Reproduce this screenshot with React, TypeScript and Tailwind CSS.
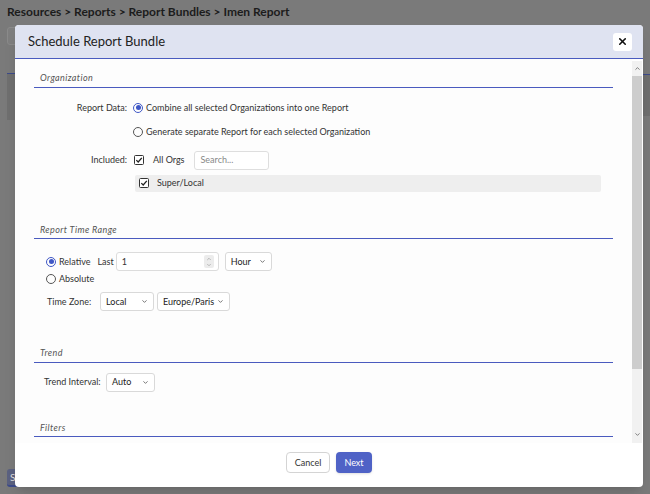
import { X, ChevronDown, ChevronUp } from 'lucide-react';

const Radio = ({ checked }: { checked?: boolean }) => (
    <span className={`w-[10px] h-[10px] rounded-full border flex items-center justify-center shrink-0 ${checked ? 'border-[#3f57c6]' : 'border-[#555]'}`}>
        {checked && <span className="w-[5px] h-[5px] rounded-full bg-[#3f57c6]" />}
    </span>
);

const Check = () => (
    <svg width="10" height="10" viewBox="0 0 10 10" className="shrink-0">
        <rect x="0.5" y="0.5" width="9" height="9" rx="1" fill="white" stroke="#333" />
        <path d="M2.3 5.1 L4.2 7 L7.8 2.8" fill="none" stroke="#222" strokeWidth="1.3" />
    </svg>
);

const Select = ({ value, w }: { value: string; w: string }) => (
    <div className={`${w} h-[19px] border border-[#d9d9d9] rounded-[3px] bg-white flex items-center justify-between pl-[5px] pr-[5px] text-[9px] text-[#222]`}>
        <span>{value}</span>
        <ChevronDown size={7} strokeWidth={2.5} className="text-[#444]" />
    </div>
);

const Heading = ({ label, top }: { label: string; top: string }) => (
    <div className={`${top} border-b border-[#4a5bbf] pl-[6px] pb-[2px]`}>
        <span className="text-[9px] leading-[12px] italic tracking-[0.4px] text-[#555]">{label}</span>
    </div>
);

const App = () => {
    return (
        <div className="relative w-[650px] h-[494px] overflow-hidden bg-[#7a7a7a] font-['Lato',sans-serif]">
            {/* page behind the overlay */}
            <div className="px-[7px] pt-[3px] text-[12px] font-bold text-[#1c1c1c] leading-[18px]">
                Resources &gt; Reports &gt; Report Bundles &gt; Imen Report
            </div>
            <div className="ml-[7px] mt-[6px] w-[20px] h-[18px] rounded-[3px] border border-[#8a8a8a] bg-[#7e7e7e]" />
            <div className="ml-[7px] mt-[28px] w-[10px] h-[47px] border-t border-[#3c4a8a] bg-[#6f6f6f]" />
            <div className="absolute right-0 top-[74px] w-[7px] h-[42px] border-t border-[#3c4a8a] bg-[#6f6f6f]" />
            <div className="absolute left-[7px] bottom-[7px] w-[50px] h-[18px] rounded-[3px] bg-[#5b6180] border-b-2 border-[#3c4a8a] text-[10px] text-[#ddd] pl-[3px] leading-[16px]">S</div>

            {/* modal */}
            <div className="absolute left-[15px] top-[25px] w-[628px] h-[462px] bg-white rounded-[4px] shadow-lg overflow-hidden flex flex-col">
                <div className="h-[34px] shrink-0 bg-[#dfe3f1] border-b border-[#4a5bbf] flex items-center justify-between pl-[13px] pr-[11px]">
                    <span className="text-[13px] text-[#222]">Schedule Report Bundle</span>
                    <div className="w-[19px] h-[18px] bg-white rounded-[3px] flex items-center justify-center">
                        <X size={11} strokeWidth={3.5} className="text-[#111]" />
                    </div>
                </div>

                <div className="flex-1 flex min-h-0">
                    <div className="flex-1 px-[19px] overflow-hidden bg-[#fdfdfd] text-[9px] text-[#333]">
                        {/* Organization */}
                        <Heading label="Organization" top="pt-[12px]" />
                        <div className="mt-[12px] flex">
                            <div className="w-[93px] text-right leading-[16px]">Report Data:</div>
                            <div className="ml-[6px] flex flex-col gap-[8px]">
                                <div className="h-[16px] flex items-center gap-[3px]">
                                    <Radio checked />
                                    <span>Combine all selected Organizations into one Report</span>
                                </div>
                                <div className="h-[16px] flex items-center gap-[3px]">
                                    <Radio />
                                    <span>Generate separate Report for each selected Organization</span>
                                </div>
                            </div>
                        </div>
                        <div className="mt-[11px] flex items-center">
                            <div className="w-[93px] text-right">Included:</div>
                            <div className="ml-[7px] flex items-center">
                                <Check />
                                <span className="ml-[9px]">All Orgs</span>
                                <div className="ml-[9px] w-[75px] h-[19px] border border-[#dedede] rounded-[3px] bg-white pl-[6px] flex items-center text-[#888]">Search...</div>
                            </div>
                        </div>
                        <div className="mt-[5px] ml-[101px] mr-[12px] h-[17px] bg-[#eeeeee] rounded-[2px] flex items-center pl-[4px]">
                            <Check />
                            <span className="ml-[8px]">Super/Local</span>
                        </div>

                        {/* Report Time Range */}
                        <Heading label="Report Time Range" top="mt-[31px]" />
                        <div className="mt-[13px] pl-[12px] flex items-center">
                            <Radio checked />
                            <span className="ml-[3px]">Relative</span>
                            <span className="ml-[7px]">Last</span>
                            <div className="ml-[2px] w-[103px] h-[19px] border border-[#dcdcdc] rounded-[3px] bg-white flex items-center justify-between pl-[5px] pr-[4px]">
                                <span>1</span>
                                <span className="w-[10px] h-[13px] bg-[#ececec] rounded-[2px] flex flex-col items-center justify-center text-[#999]">
                                    <ChevronUp size={6} strokeWidth={2.5} />
                                    <ChevronDown size={6} strokeWidth={2.5} />
                                </span>
                            </div>
                            <div className="ml-[6px]"><Select value="Hour" w="w-[47px]" /></div>
                        </div>
                        <div className="mt-[1px] pl-[12px] h-[14px] flex items-center">
                            <Radio />
                            <span className="ml-[3px]">Absolute</span>
                        </div>
                        <div className="mt-[6px] pl-[13px] flex items-center">
                            <span className="w-[53px]">Time Zone:</span>
                            <Select value="Local" w="w-[54px]" />
                            <div className="ml-[3px]"><Select value="Europe/Paris" w="w-[73px]" /></div>
                        </div>

                        {/* Trend */}
                        <Heading label="Trend" top="mt-[35px]" />
                        <div className="mt-[10px] pl-[10px] flex items-center">
                            <span className="w-[62px]">Trend Interval:</span>
                            <Select value="Auto" w="w-[49px]" />
                        </div>

                        {/* Filters */}
                        <Heading label="Filters" top="mt-[29px]" />
                    </div>

                    {/* scrollbar */}
                    <div className="w-[10px] mr-[1px] mt-[2px] bg-[#f1f1f1] flex flex-col items-center">
                        <div className="h-[15px] flex items-center justify-center text-[#555]">
                            <ChevronUp size={7} strokeWidth={2.5} />
                        </div>
                        <div className="w-full h-[293px] bg-[#cdcdcd]" />
                        <div className="flex-1" />
                        <div className="h-[12px] flex items-start justify-center text-[#555]">
                            <ChevronDown size={7} strokeWidth={2.5} />
                        </div>
                    </div>
                </div>

                <div className="h-[44px] shrink-0 flex items-center justify-center gap-[6px] pb-[5px] text-[9px]">
                    <button className="w-[44px] h-[21px] rounded-[4px] border border-[#d4d4d4] bg-white text-[#333]">Cancel</button>
                    <button className="w-[36px] h-[21px] rounded-[4px] bg-[#4f62c6] text-white shadow-sm">Next</button>
                </div>
            </div>
        </div>
    );
};

export default App;
